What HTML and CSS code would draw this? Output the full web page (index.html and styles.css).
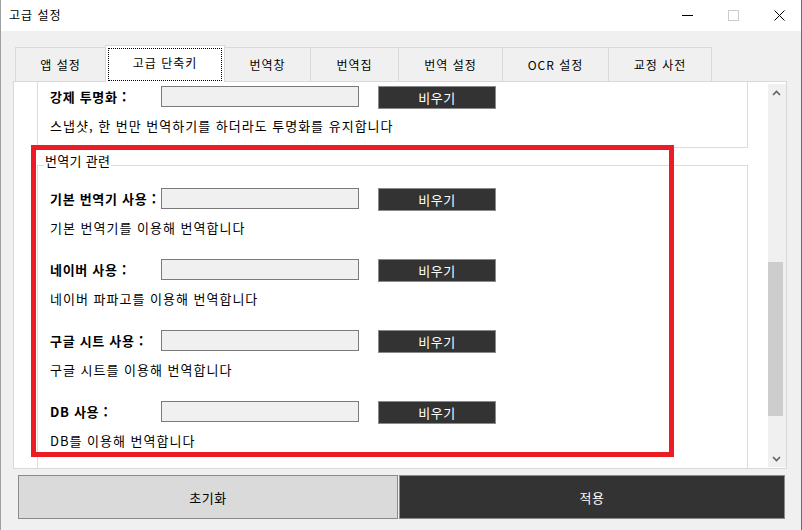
FILE: index.html
```html
<!DOCTYPE html>
<html lang="ko">
<head>
<meta charset="utf-8">
<title>고급 설정</title>
<link rel="stylesheet" href="styles.css">
</head>
<body>
<div class="window">
  <header class="titlebar">
    <span class="title">고급 설정</span>
    <div class="controls">
      <div class="ctrl">
        <svg width="11" height="11" viewBox="0 0 11 11"><line x1="0" y1="5.5" x2="11" y2="5.5" stroke="#000" stroke-width="1"/></svg>
      </div>
      <div class="ctrl">
        <svg width="11" height="11" viewBox="0 0 11 11"><rect x="0.5" y="0.5" width="10" height="10" fill="none" stroke="#cccccc" stroke-width="1"/></svg>
      </div>
      <div class="ctrl">
        <svg width="11" height="11" viewBox="0 0 11 11"><path d="M0.5 0.5 L10.5 10.5 M10.5 0.5 L0.5 10.5" stroke="#000" stroke-width="1" fill="none"/></svg>
      </div>
    </div>
  </header>

  <nav class="tabs">
    <div class="tab t1">앱 설정</div>
    <div class="tab t2 active">고급 단축키</div>
    <div class="tab t3">번역창</div>
    <div class="tab t4">번역집</div>
    <div class="tab t5">번역 설정</div>
    <div class="tab t6">OCR 설정</div>
    <div class="tab t7">교정 사전</div>
  </nav>

  <section class="panel">
    <div class="scroll-view">
      <div class="scroll-content">
        <div class="group group-cut">
          <div class="item">
            <div class="row">
              <span class="label">강제 투명화 :</span>
              <div class="input"></div>
              <button class="clear">비우기</button>
            </div>
            <div class="desc">스냅샷, 한 번만 번역하기를 하더라도 투명화를 유지합니다</div>
          </div>
        </div>

        <div class="group group-main">
          <span class="legend">번역기 관련</span>
          <div class="item">
            <div class="row">
              <span class="label">기본 번역기 사용 :</span>
              <div class="input"></div>
              <button class="clear">비우기</button>
            </div>
            <div class="desc">기본 번역기를 이용해 번역합니다</div>
          </div>
          <div class="item">
            <div class="row">
              <span class="label">네이버 사용 :</span>
              <div class="input"></div>
              <button class="clear">비우기</button>
            </div>
            <div class="desc">네이버 파파고를 이용해 번역합니다</div>
          </div>
          <div class="item">
            <div class="row">
              <span class="label">구글 시트 사용 :</span>
              <div class="input"></div>
              <button class="clear">비우기</button>
            </div>
            <div class="desc">구글 시트를 이용해 번역합니다</div>
          </div>
          <div class="item">
            <div class="row">
              <span class="label">DB 사용 :</span>
              <div class="input"></div>
              <button class="clear">비우기</button>
            </div>
            <div class="desc">DB를 이용해 번역합니다</div>
          </div>
        </div>
      </div>
      <div class="annotation"></div>
    </div>
    <div class="scrollbar">
      <div class="sb-btn">
        <svg width="9" height="6" viewBox="0 0 9 6"><path d="M1 5 L4.5 1.5 L8 5" stroke="#606060" stroke-width="1.6" fill="none"/></svg>
      </div>
      <div class="sb-track"><div class="sb-thumb"></div></div>
      <div class="sb-btn">
        <svg width="9" height="6" viewBox="0 0 9 6"><path d="M1 1 L4.5 4.5 L8 1" stroke="#606060" stroke-width="1.6" fill="none"/></svg>
      </div>
    </div>
  </section>

  <footer class="actions">
    <button class="action reset">초기화</button>
    <button class="action apply">적용</button>
  </footer>
</div>
</body>
</html>
```

FILE: styles.css
```css
* { box-sizing: border-box; }
html, body { margin: 0; padding: 0; }
body {
  width: 802px;
  height: 530px;
  overflow: hidden;
  background: #f0f0f0;
  color: #000;
  font-family: "Noto Sans CJK KR", "Noto Sans", sans-serif;
}
.window {
  position: relative;
  width: 802px;
  height: 530px;
  background: #f0f0f0;
  display: flex;
  flex-direction: column;
}
.window::after {
  content: "";
  position: absolute;
  inset: 0;
  box-shadow: inset -1px 0 #6b6b6b, inset 1px 0 #a0a0a0;
  pointer-events: none;
}

/* title bar */
.titlebar {
  height: 31px;
  flex: none;
  background: #fff;
  display: flex;
  align-items: center;
}
.title {
  flex: 1;
  padding-left: 9px;
  font-size: 12px;
  letter-spacing: 1px;
  line-height: 16px;
  margin-top: -1px;
}
.controls { display: flex; height: 31px; }
.ctrl {
  width: 46px;
  height: 31px;
  display: flex;
  align-items: center;
  justify-content: center;
}
.ctrl svg { display: block; }

/* tabs */
.tabs {
  flex: none;
  height: 36px;
  margin-top: 14px;
  padding-left: 15px;
  display: flex;
  align-items: flex-end;
  position: relative;
  z-index: 1;
}
.tab {
  height: 34px;
  margin-left: -1px;
  border: 1px solid #d9d9d9;
  border-bottom: none;
  background: #f0f0f0;
  font-size: 12px;
  letter-spacing: 1px;
  line-height: 16px;
  display: flex;
  align-items: center;
  justify-content: center;
  padding-top: 1px;
}
.tab:first-child { margin-left: 0; }
.t1 { width: 91px; }
.t2 { width: 120px; }
.t3 { width: 87px; }
.t4 { width: 89px; }
.t5 { width: 105px; }
.t6 { width: 107px; }
.t7 { width: 104px; }
.tab.active {
  height: 37px;
  margin-bottom: -1px;
  background: #fff;
  position: relative;
  z-index: 2;
  padding-top: 0;
  padding-bottom: 3px;
}
.tab.active::after {
  content: "";
  position: absolute;
  left: 2px;
  right: 2px;
  top: 2px;
  bottom: 1px;
  border: 1px dotted #000;
}

/* panel */
.panel {
  flex: none;
  margin-left: 13px;
  width: 774px;
  height: 388px;
  border: 1px solid #d9d9d9;
  background: #fff;
  display: flex;
}
.scroll-view {
  width: 754px;
  height: 386px;
  overflow: hidden;
  position: relative;
}
.scroll-content { padding-left: 23px; }

.group {
  width: 711px;
  border: 1px solid #dcdcdc;
  position: relative;
}
.group-cut {
  border-top: none;
  padding: 4px 12px 12px;
}
.group-main {
  margin-top: 17px;
  padding: 22px 12px 40px;
}
.legend {
  position: absolute;
  top: -14px;
  left: 6px;
  padding: 0 1px;
  background: #fff;
  font-size: 13px;
  letter-spacing: 0.3px;
  line-height: 18px;
}
.item + .item { margin-top: 22px; }
.row {
  display: flex;
  align-items: flex-start;
  height: 23px;
}
.label {
  width: 111px;
  flex: none;
  font-size: 13px;
  font-weight: bold;
  letter-spacing: 0.7px;
  line-height: 21px;
  white-space: nowrap;
}
.input {
  width: 198px;
  height: 21px;
  flex: none;
  border: 1px solid #7a7a7a;
  background: #f0f0f0;
}
.clear {
  margin: 0 0 0 19px;
  padding: 0;
  width: 118px;
  height: 23px;
  flex: none;
  background: #333333;
  border: 1px solid #8a8a8a;
  color: #fff;
  font-family: "Noto Sans CJK KR", "Noto Sans", sans-serif;
  font-size: 13px;
  letter-spacing: 0.5px;
  line-height: 19px;
}
.desc {
  margin-top: 8px;
  font-size: 13px;
  letter-spacing: 1px;
  line-height: 18px;
  white-space: nowrap;
}
.annotation {
  position: absolute;
  left: 17px;
  top: 63px;
  width: 643px;
  height: 312px;
  border: 5px solid #ed1c24;
  pointer-events: none;
}

/* scrollbar */
.scrollbar {
  width: 18px;
  margin: 2px 0 1px 0;
  background: #f0f0f0;
  display: flex;
  flex-direction: column;
}
.sb-btn {
  height: 17px;
  flex: none;
  display: flex;
  align-items: center;
  justify-content: center;
  padding-right: 2px;
}
.sb-btn svg { display: block; }
.sb-track {
  flex: 1;
  padding-top: 161px;
}
.sb-thumb {
  width: 15px;
  height: 154px;
  background: #cdcdcd;
}

/* footer */
.actions {
  flex: none;
  display: flex;
  gap: 1px;
  height: 44px;
  margin: 6px 0 0 18px;
}
.action {
  margin: 0;
  padding: 0;
  height: 44px;
  border: 1px solid #8a8a8a;
  font-family: "Noto Sans CJK KR", "Noto Sans", sans-serif;
  font-size: 13px;
  letter-spacing: 0.5px;
}
.reset {
  width: 380px;
  background: #dadada;
  color: #000;
}
.apply {
  width: 386px;
  background: #333333;
  color: #fff;
}
```
